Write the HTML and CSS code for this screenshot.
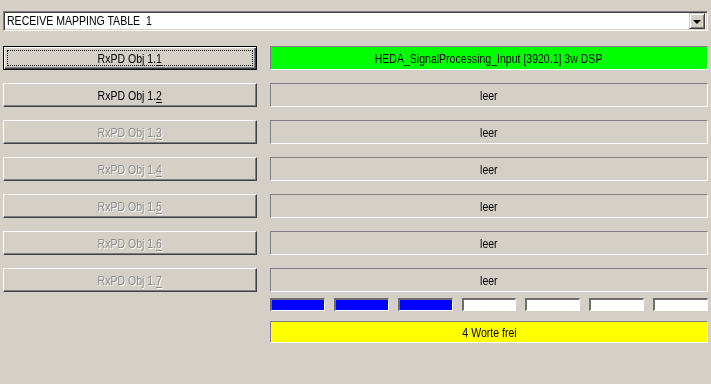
FILE: index.html
```html
<!DOCTYPE html>
<html lang="de">
<head>
  <meta charset="UTF-8">
  <meta name="viewport" content="width=device-width, initial-scale=1.0">
  <title>Receive Mapping Table</title>
  <link rel="stylesheet" href="styles.css">
</head>
<body>
  <div class="dialog">
    <div class="combo">
      <span class="combo-text"><span class="narrow left">RECEIVE MAPPING TABLE&nbsp; 1</span></span>
      <span class="combo-btn"><span class="arrow"></span></span>
    </div>

    <div class="rows">
      <button class="obj default"><span class="focus"><span class="narrow">RxPD Obj 1.<u>1</u></span></span></button>
      <div class="slot used"><span class="narrow">HEDA_SignalProcessing_Input [3920.1] 3w DSP</span></div>

      <button class="obj"><span class="narrow">RxPD Obj 1.<u>2</u></span></button>
      <div class="slot"><span class="narrow">leer</span></div>

      <button class="obj" disabled><span class="narrow">RxPD Obj 1.<u>3</u></span></button>
      <div class="slot"><span class="narrow">leer</span></div>

      <button class="obj" disabled><span class="narrow">RxPD Obj 1.<u>4</u></span></button>
      <div class="slot"><span class="narrow">leer</span></div>

      <button class="obj" disabled><span class="narrow">RxPD Obj 1.<u>5</u></span></button>
      <div class="slot"><span class="narrow">leer</span></div>

      <button class="obj" disabled><span class="narrow">RxPD Obj 1.<u>6</u></span></button>
      <div class="slot"><span class="narrow">leer</span></div>

      <button class="obj" disabled><span class="narrow">RxPD Obj 1.<u>7</u></span></button>
      <div class="slot"><span class="narrow">leer</span></div>
    </div>

    <div class="footer">
      <div class="bars">
        <span class="bar on"></span>
        <span class="bar on"></span>
        <span class="bar on"></span>
        <span class="bar"></span>
        <span class="bar"></span>
        <span class="bar"></span>
        <span class="bar"></span>
      </div>
      <div class="free"><span class="narrow">4 Worte frei</span></div>
    </div>
  </div>
</body>
</html>
```

FILE: styles.css
```css
body {
  margin: 0;
  background-color: #d4d0c8;
  font-family: "Liberation Sans", Arial, sans-serif;
  font-size: 13px;
  color: #000;
}
/* the dialog font is a narrow sans; squeeze the regular one to match */
.narrow {
  display: inline-block;
  white-space: pre;
  transform: scaleX(0.81);
}
.narrow.left {
  transform-origin: left center;
}
.dialog {
  padding: 11px 3px 0 3px;
}
.combo {
  height: 20px;
  box-sizing: border-box;
  display: flex;
  align-items: center;
  background-color: #fff;
  border: 1px solid;
  border-color: #808080 #fff #fff #808080;
  box-shadow: inset 1px 1px #404040, inset -1px -1px #d4d0c8;
  padding: 1px 2px 1px 3px;
}
.combo-text {
  flex: 1;
  line-height: 16px;
}
.combo-btn {
  width: 16px;
  height: 16px;
  box-sizing: border-box;
  background-color: #d4d0c8;
  border: 1px solid;
  border-color: #d4d0c8 #404040 #404040 #d4d0c8;
  box-shadow: inset 1px 1px #fff, inset -1px -1px #808080;
  display: flex;
  align-items: center;
  justify-content: center;
}
.arrow {
  width: 0;
  height: 0;
  border-left: 4px solid transparent;
  border-right: 4px solid transparent;
  border-top: 4px solid #000;
  margin-top: 1px;
}
.rows {
  margin-top: 15px;
  display: grid;
  grid-template-columns: 254px 1fr;
  grid-auto-rows: 24px;
  column-gap: 13px;
  row-gap: 13px;
}
.obj {
  font: inherit;
  color: #000;
  background-color: #d4d0c8;
  border: 1px solid;
  border-color: #fff #404040 #404040 #fff;
  box-shadow: inset -1px -1px #808080;
  padding: 0;
  display: flex;
  align-items: center;
  justify-content: center;
}
.obj.default {
  border: 1px solid #000;
  box-shadow: inset 1px 1px #fff, inset -1px -1px #404040, inset -2px -2px #808080;
  padding: 3px;
}
.obj .focus {
  flex: 1;
  align-self: stretch;
  display: flex;
  align-items: center;
  justify-content: center;
  outline: 1px dotted #000;
  outline-offset: -1px;
}
.obj:disabled {
  color: #8c8c8c;
  text-shadow: 1px 1px 0 #fff;
}
.obj u {
  text-underline-offset: 2px;
}
.slot {
  border: 1px solid;
  border-color: #808080 #fff #fff #808080;
  display: flex;
  align-items: center;
  justify-content: center;
}
.slot.used {
  background-color: #00ff00;
}
.footer {
  margin-top: 6px;
  margin-left: 267px;
}
.bars {
  display: flex;
  gap: 9px;
}
.bar {
  flex: 1;
  height: 13px;
  box-sizing: border-box;
  background-color: #fff;
  border-style: solid;
  border-width: 2px 1px 1px 2px;
  border-color: #6e6e6e #fff #fff #6e6e6e;
}
.bar.on {
  background-color: #0000ff;
}
.free {
  margin-top: 10px;
  height: 22px;
  box-sizing: border-box;
  background-color: #ffff00;
  border: 1px solid;
  border-color: #808080 #fff #fff #808080;
  display: flex;
  align-items: center;
  justify-content: center;
}
```
